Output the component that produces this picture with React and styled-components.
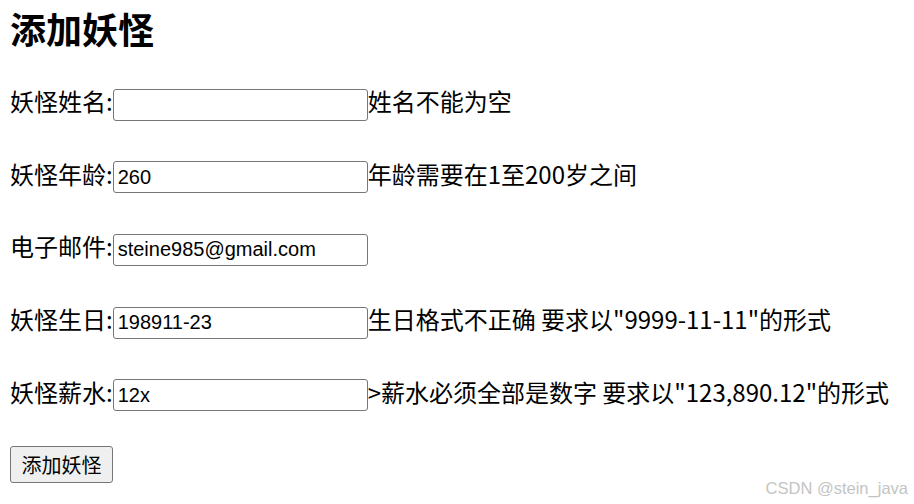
import React from "react";
import styled, { createGlobalStyle } from "styled-components";

const Global = createGlobalStyle`
  html, body { margin: 0; padding: 0; background: #fff; }
  body { font-family: "Noto Sans CJK SC", "Noto Sans", sans-serif; color: #000; }
`;

const Page = styled.div`
  position: relative;
  width: 914px;
  height: 504px;
  box-sizing: border-box;
  padding: 2px 10px 0 10px;
  overflow: hidden;
`;

const Title = styled.h2`
  margin: 0;
  font-size: 36px;
  line-height: 52px;
  font-weight: 700;
`;

const Form = styled.form`
  display: flex;
  flex-direction: column;
  align-items: flex-start;
  gap: 35.2px;
  margin-top: 29px;
`;

const Row = styled.div`
  display: flex;
  align-items: baseline;
  font-size: 24px;
  white-space: nowrap;
`;

const Label = styled.label`
  font-size: 24px;
`;

const Input = styled.input`
  box-sizing: border-box;
  width: 255px;
  height: 32px;
  margin: 0;
  padding: 1px 4px;
  border: 1px solid #767676;
  border-radius: 3px;
  font-family: "Liberation Sans", Arial, sans-serif;
  font-size: 20px;
  color: #000;
  background: #fff;
  outline: none;
`;

const Msg = styled.span`
  font-size: 24px;
`;

const Button = styled.button`
  box-sizing: border-box;
  width: 103px;
  height: 37px;
  padding: 0;
  border: 1px solid #767676;
  border-radius: 3px;
  background: #efefef;
  font-family: "Noto Sans CJK SC", sans-serif;
  font-size: 20px;
  color: #000;
`;

const Watermark = styled.div`
  position: absolute;
  right: 6px;
  bottom: 6px;
  font-family: "Liberation Sans", Arial, sans-serif;
  font-size: 16.5px;
  color: #c4c4c4;
`;

const fields = [
  { label: "妖怪姓名:", value: "", msg: "姓名不能为空" },
  { label: "妖怪年龄:", value: "260", msg: "年龄需要在1至200岁之间" },
  { label: "电子邮件:", value: "steine985@gmail.com", msg: "" },
  { label: "妖怪生日:", value: "198911-23", msg: "生日格式不正确 要求以\"9999-11-11\"的形式" },
  { label: "妖怪薪水:", value: "12x", msg: ">薪水必须全部是数字 要求以\"123,890.12\"的形式" },
];

export default function App() {
  return (
    <>
      <Global />
      <Page>
        <Title>添加妖怪</Title>
        <Form onSubmit={(e) => e.preventDefault()}>
          {fields.map((f) => (
            <Row key={f.label}>
              <Label>{f.label}</Label>
              <Input defaultValue={f.value} />
              <Msg>{f.msg}</Msg>
            </Row>
          ))}
          <Button type="submit">添加妖怪</Button>
        </Form>
        <Watermark>CSDN @stein_java</Watermark>
      </Page>
    </>
  );
}
